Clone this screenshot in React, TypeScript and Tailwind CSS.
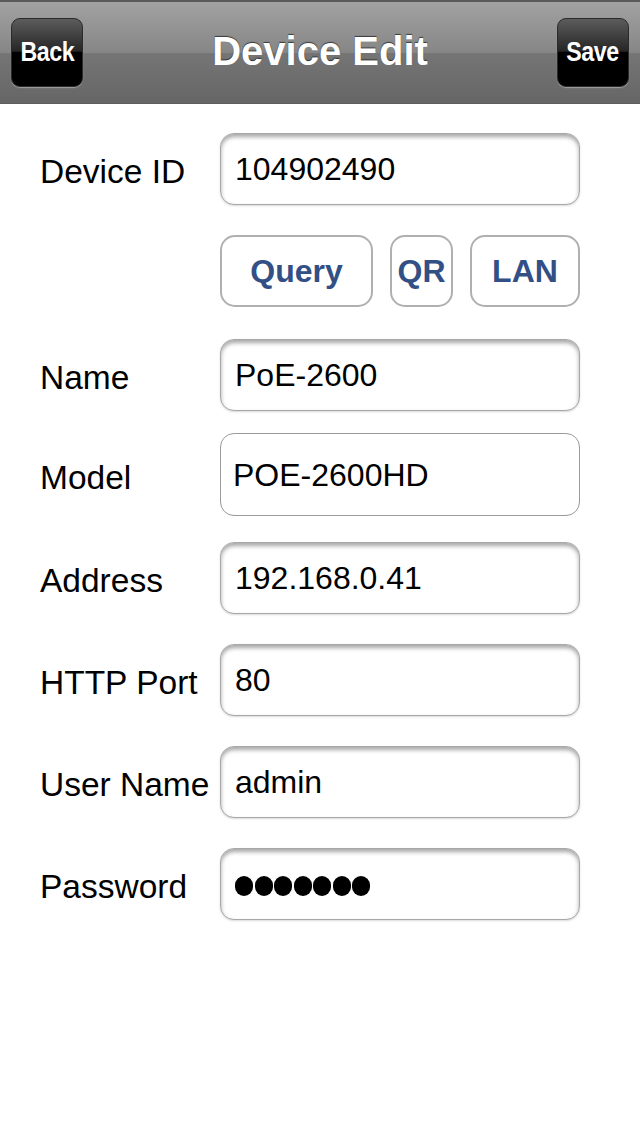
import React from 'react';

const font = { fontFamily: '"Liberation Sans", Arial, sans-serif' };

const fieldClass =
  'w-[360px] bg-white rounded-[14px] border-[1.5px] border-[#a8a8a8] shadow-[inset_0_3px_4px_rgba(0,0,0,0.35),0_1px_2px_rgba(0,0,0,0.15)] flex items-center pl-[14px] text-[32px] text-black';

const NavButton: React.FC<{ label: string }> = ({ label }) => (
  <button className="w-[72px] h-[69px] rounded-[9px] border border-[#2a2a2a] bg-[linear-gradient(#5c5c5c,#262626_48%,#000_50%,#000)] shadow-[0_1px_1px_rgba(255,255,255,0.35)] flex items-center justify-center text-white font-bold">
    <span className="inline-block text-[27px] scale-x-[0.86] tracking-[-0.5px]">{label}</span>
  </button>
);

const Row: React.FC<{ label: string; className: string; children: React.ReactNode }> = ({ label, className, children }) => (
  <div className={`flex items-center ${className}`}>
    <div className="w-[180px] pt-[6px] text-[33.5px] text-black leading-none whitespace-nowrap">{label}</div>
    {children}
  </div>
);

const ActionButton: React.FC<{ label: string; w: string }> = ({ label, w }) => (
  <button className={`${w} h-[72px] rounded-[15px] border-2 border-[#b0b0b0] bg-white flex items-center justify-center text-[32px] font-bold text-[#324f86]`}>
    {label}
  </button>
);

export default function App() {
  return (
    <div className="w-[640px] h-[1136px] bg-white overflow-hidden" style={font}>
      <div className="h-[104px] border-t-2 border-[#5a5a5a] border-b border-b-[#5e5e5e] bg-[linear-gradient(#a2a2a2,#868686_50%,#757575_51%,#666666)] flex items-center justify-between px-[11px]">
        <NavButton label="Back" />
        <div className="text-white font-bold text-[40px] [text-shadow:0_-1px_1px_rgba(0,0,0,0.6)] pb-[4px]">Device Edit</div>
        <NavButton label="Save" />
      </div>

      <div className="pl-[40px]">
        <Row label="Device ID" className="mt-[29px]">
          <div className={`${fieldClass} h-[72px]`}>104902490</div>
        </Row>

        <div className="flex ml-[180px] mt-[30px] gap-[17px]">
          <ActionButton label="Query" w="w-[153px]" />
          <ActionButton label="QR" w="w-[63px]" />
          <ActionButton label="LAN" w="w-[110px]" />
        </div>

        <Row label="Name" className="mt-[32px]">
          <div className={`${fieldClass} h-[72px]`}>PoE-2600</div>
        </Row>

        <Row label="Model" className="mt-[22px]">
          <div className="w-[360px] h-[83px] bg-white rounded-[14px] border-[1.5px] border-[#9a9a9a] flex items-center pl-[12px] text-[32px] text-black">
            POE-2600HD
          </div>
        </Row>

        <Row label="Address" className="mt-[26px]">
          <div className={`${fieldClass} h-[72px]`}>192.168.0.41</div>
        </Row>

        <Row label="HTTP Port" className="mt-[30px]">
          <div className={`${fieldClass} h-[72px]`}>80</div>
        </Row>

        <Row label="User Name" className="mt-[30px]">
          <div className={`${fieldClass} h-[72px]`}>admin</div>
        </Row>

        <Row label="Password" className="mt-[30px]">
          <div className={`${fieldClass} h-[72px]`}>
            <div className="flex gap-[1.5px] pt-[4px]">
              {Array.from({ length: 7 }).map((_, i) => (
                <div key={i} className="w-[18px] h-[20px] rounded-full bg-black" />
              ))}
            </div>
          </div>
        </Row>
      </div>
    </div>
  );
}
